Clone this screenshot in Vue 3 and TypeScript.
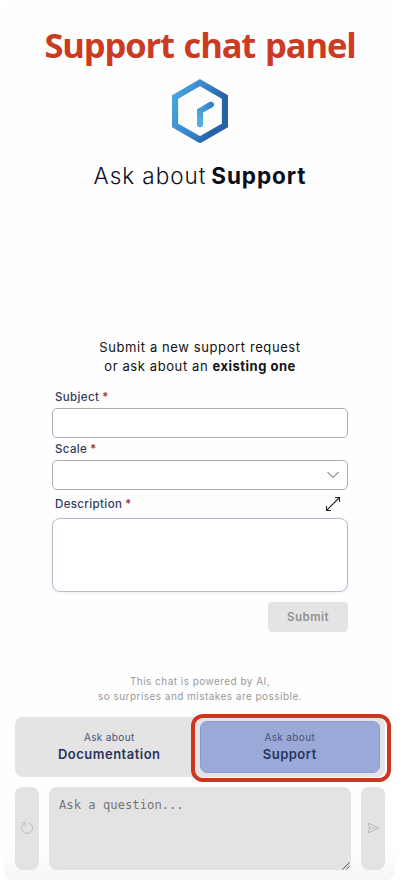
<script setup lang="ts">
import { ref } from 'vue'

type Mode = 'documentation' | 'support'

const mode = ref<Mode>('support')
const subject = ref('')
const scale = ref('')
const description = ref('')
const question = ref('')
</script>

<template>
  <main class="panel">
    <h1 class="title">Support chat panel</h1>
    <svg class="logo" viewBox="0 0 56 64" aria-hidden="true">
      <defs>
        <linearGradient id="hexFill" x1="0" y1="0.2" x2="1" y2="0.6">
          <stop offset="0" stop-color="#46a3de" />
          <stop offset="0.45" stop-color="#3a86c8" />
          <stop offset="0.85" stop-color="#2861ab" />
        </linearGradient>
        <linearGradient id="handFill" gradientUnits="userSpaceOnUse" x1="26" y1="38" x2="43" y2="24">
          <stop offset="0" stop-color="#50ace3" />
          <stop offset="1" stop-color="#3778bd" />
        </linearGradient>
      </defs>
      <path d="M28 3.6 L53 18 V46.4 L28 60.8 L3 46.4 V18 Z" fill="none" stroke="url(#hexFill)" stroke-width="6.2" />
      <path d="M28 45.2 V32 L39 25.6" fill="none" stroke="url(#handFill)" stroke-width="6" stroke-linecap="round" />
    </svg>
    <h2 class="heading"><span class="light">Ask about</span><b>Support</b></h2>

    <p class="intro">
      Submit a new support request<br />
      or ask about an <b>existing one</b>
    </p>

    <form class="form" @submit.prevent>
      <label class="label" for="subject"><span>Subject</span><i>*</i></label>
      <input id="subject" v-model="subject" class="field" />
      <label class="label scale-label" for="scale"><span>Scale</span><i>*</i></label>
      <div id="scale" class="field select" role="combobox">
        <span>{{ scale }}</span>
        <svg width="14" height="9" viewBox="0 0 14 9"><path d="M1.5 1 L7 6.5 L12.5 1" fill="none" stroke="#8f929e" stroke-width="1.1" /></svg>
      </div>
      <div class="desc-head">
        <label class="label" for="description"><span>Description</span><i>*</i></label>
        <svg width="16" height="16" viewBox="0 0 16 16">
          <path d="M1.5 14.5 L14.5 1.5 M10 1.5 H14.5 V6 M1.5 10 V14.5 H6" fill="none" stroke="#22242c" stroke-width="1.1" />
        </svg>
      </div>
      <textarea id="description" v-model="description" class="field area"></textarea>
      <button class="submit" type="submit">Submit</button>
    </form>

    <p class="note">This chat is powered by AI,<br />so surprises and mistakes are possible.</p>

    <nav class="tabs">
      <button class="tab" :class="{ active: mode === 'documentation' }" @click="mode = 'documentation'">
        <small>Ask about</small><b>Documentation</b>
      </button>
      <button class="tab" :class="{ active: mode === 'support' }" @click="mode = 'support'">
        <small>Ask about</small><b>Support</b>
      </button>
      <div class="ring"></div>
    </nav>

    <section class="composer">
      <button class="side" aria-label="Restart">
        <svg width="14" height="14" viewBox="0 0 14 14">
          <path d="M8.6 1.7 A5.5 5.5 0 1 1 3.9 2.5 M1.8 1.5 H5 V4.7" fill="none" stroke="#bcbcbc" stroke-width="1" />
        </svg>
      </button>
      <div class="question">
        <textarea v-model="question" placeholder="Ask a question..."></textarea>
        <svg class="grip" width="8" height="8" viewBox="0 0 8 8"><path d="M0.5 7.5 L7.5 0.5 M4.3 7.5 L7.5 4.3" stroke="#555" stroke-width="1" /></svg>
      </div>
      <button class="side send" aria-label="Send">
        <svg width="13" height="12" viewBox="0 0 13 12">
          <path d="M1 1 L12 6 L1 11 L2.7 6 Z M2.7 6 H8" fill="none" stroke="#b8b8b8" stroke-width="1" />
        </svg>
      </button>
    </section>
  </main>
</template>

<style>
body {
  background: #fff;
}
</style>

<style scoped>
* {
  box-sizing: border-box;
}
.panel {
  display: flex;
  flex-direction: column;
  width: 391px;
  height: 876px;
  margin: 4px;
  padding: 0 10px 10px 11px;
  border-radius: 9px;
  background: linear-gradient(to bottom, #fefefe 0, #fefefe 846px, #f5f5f5 876px);
  box-shadow: 0 0 1px #eee;
  font-family: Inter, sans-serif;
  color: #111;
}
h1, h2, p {
  margin: 0;
  text-align: center;
  white-space: nowrap;
}
button, input, textarea {
  font-family: inherit;
  border: 0;
  padding: 0;
  outline: 0;
}
.title {
  height: 75px;
  padding-top: 17px;
  font: 700 34.5px/48px "Open Sans", sans-serif;
  letter-spacing: -1.15px;
  word-spacing: 2px;
  color: #cc3a22;
}
.logo {
  width: 56px;
  height: 64px;
  flex: none;
  align-self: center;
}
.heading {
  display: flex;
  justify-content: center;
  gap: 5px;
  margin-top: 17px;
  height: 32px;
  font-size: 22.5px;
  line-height: 32px;
  font-weight: 300;
  color: #0b0e20;
}
.heading .light {
  letter-spacing: 0.95px;
}
.heading b {
  font-weight: 700;
  letter-spacing: 0.9px;
}
.intro {
  margin-top: 146px;
  font-size: 13px;
  line-height: 19px;
  letter-spacing: 0.6px;
}
.intro b {
  font-weight: 700;
  letter-spacing: 0.5px;
}
.form {
  display: flex;
  flex-direction: column;
  width: 296px;
  margin: 12px 0 0 37px;
}
.label {
  display: flex;
  gap: 3px;
  height: 20px;
  padding-left: 3px;
  font-size: 11.5px;
  line-height: 18px;
  font-weight: 500;
  letter-spacing: 0.37px;
  color: #333a5c;
}
.label i {
  font-style: normal;
  color: #a02328;
}
.field {
  width: 296px;
  height: 30px;
  border: 1px solid #aaaab6;
  border-radius: 5px;
  background: #fff;
}
.scale-label {
  height: 22px;
  padding-top: 2px;
}
.select {
  display: flex;
  align-items: center;
  justify-content: space-between;
  padding: 0 7px;
}
.desc-head {
  display: flex;
  justify-content: space-between;
  height: 28px;
  padding: 5px 7px 0 0;
}
.desc-head svg {
  margin-top: 1px;
}
.area {
  height: 74px;
  border-color: #b6bacd;
  border-radius: 8px;
  resize: none;
  box-shadow: 0 1px 3px #0000000f;
}
.submit {
  align-self: flex-end;
  width: 80px;
  height: 30px;
  margin-top: 10px;
  border-radius: 4px;
  background: #e4e4e4;
  color: #919191;
  font-size: 11.5px;
  font-weight: 600;
  letter-spacing: 0.5px;
}
.note {
  margin-top: 42px;
  font-size: 10px;
  line-height: 15px;
  letter-spacing: 0.46px;
  color: #999;
}
.tabs {
  position: relative;
  display: grid;
  grid-template-columns: 1fr 1fr;
  height: 60px;
  margin-top: 13px;
  padding: 4px 5px 4px 4px;
  border-radius: 8px;
  background: #e4e4e4;
}
.tab {
  display: flex;
  flex-direction: column;
  align-items: center;
  padding-top: 7px;
  border: 1px solid transparent;
  border-radius: 7px;
  background: none;
  color: #29345c;
}
.tab small {
  font-size: 10px;
  line-height: 16px;
  letter-spacing: 0.35px;
  color: #4b5272;
}
.tab b {
  font-size: 13px;
  line-height: 18px;
  font-weight: 600;
  letter-spacing: 0.5px;
}
.tab.active {
  border-color: #8b9cd4;
  background: #9ba9d8;
}
.ring {
  position: absolute;
  top: -3px;
  right: -6px;
  width: 200px;
  height: 68px;
  border: 4px solid #cc3520;
  border-radius: 12px;
  pointer-events: none;
}
.composer {
  display: flex;
  gap: 10px;
  height: 83px;
  margin-top: 10px;
}
.side {
  display: flex;
  align-items: center;
  justify-content: center;
  width: 24px;
  padding-bottom: 2px;
  border-radius: 8px;
  background: #e3e3e3;
}
.question {
  position: relative;
  display: flex;
  flex: 1;
}
.question textarea {
  flex: 1;
  padding: 10px;
  border-radius: 8px;
  background: #e3e3e3;
  resize: none;
  font: 12.2px/16px "DejaVu Sans Mono", monospace;
}
.question textarea::placeholder {
  color: #757575;
}
.grip {
  position: absolute;
  right: 1px;
  bottom: 0;
}
</style>
